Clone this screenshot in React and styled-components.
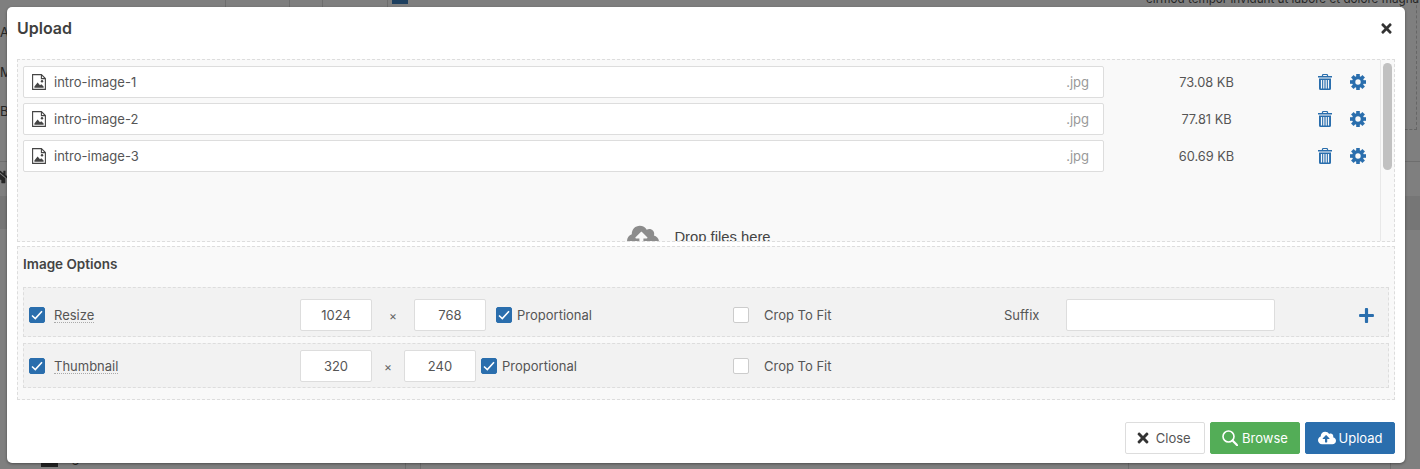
import React from 'react'
import styled, { createGlobalStyle } from 'styled-components'
import { FaPlus, FaTimes, FaCloudUploadAlt, FaHome } from 'react-icons/fa'

const Global = createGlobalStyle`
  html, body { margin: 0; padding: 0; height: 100%; overflow: hidden; }
  body { background: #7f7f7f; font-family: Inter, "Liberation Sans", sans-serif; color: #444; }
`

const Page = styled.div`
  width: 1420px;
  height: 469px;
  position: relative;
  overflow: hidden;
`
// what shows of the page behind the dimmed overlay
const Behind = styled.span`
  position: absolute;
  left: ${p => p.$x}px;
  top: ${p => p.$y}px;
  font-size: ${p => p.$size || 13}px;
  line-height: 16px;
  color: #262626;
  white-space: nowrap;
`
const BackLine = styled.div`
  position: absolute;
  left: ${p => p.$x}px;
  top: ${p => p.$y}px;
  width: ${p => p.$w}px;
  height: ${p => p.$h}px;
  background: ${p => p.$bg || '#6e6e6e'};
`
const BackDash = styled.div`
  position: absolute;
  left: 1400px;
  top: -10px;
  width: 15px;
  height: 138px;
  border: 1px dashed #666;
`
const Modal = styled.div`
  position: absolute;
  left: 7px;
  top: 7px;
  width: 1398px;
  height: 456px;
  background: #fff;
  border-radius: 5px;
  box-shadow: 0 1px 3px rgba(0, 0, 0, 0.4);
  padding: 0 10px;
  box-sizing: border-box;
  display: flex;
  flex-direction: column;
`
const Header = styled.div`
  height: 52px;
  flex: none;
  display: flex;
  align-items: center;
  justify-content: space-between;
  padding-bottom: 10px;
  box-sizing: border-box;
`
const Title = styled.h3`
  margin: 0;
  font-size: 16px;
  font-weight: 600;
  color: #3f3f3f;
`
const CloseX = styled.span`
  display: flex;
  color: #333;
  font-size: 15px;
  margin-right: 1px;
`
const DropArea = styled.div`
  height: 183px;
  flex: none;
  position: relative;
  overflow: hidden;
  background: #f9f9f9;
  border: 1px dashed #ddd;
  box-sizing: border-box;
  padding: 6px 5px;
`
const FileRow = styled.div`
  display: flex;
  align-items: center;
  height: 32px;
  margin-bottom: 5px;
`
const NameBox = styled.div`
  width: 1081px;
  height: 32px;
  flex: none;
  background: #fff;
  border: 1px solid #ddd;
  border-radius: 2px;
  box-sizing: border-box;
  display: flex;
  align-items: center;
  padding: 0 14px 0 8px;
  font-size: 13px;
  color: #555;
`
const FileIcon = styled.span`
  display: flex;
  margin-right: 8px;
`
const Ext = styled.span`
  margin-left: auto;
  color: #999;
`
const Size = styled.div`
  width: 205px;
  flex: none;
  padding-top: 1px;
  text-align: center;
  font-size: 12.8px;
  color: #555;
`
const Action = styled.span`
  width: ${p => p.$w}px;
  flex: none;
  display: flex;
  justify-content: center;
  color: #2a6ead;
`
const Rail = styled.div`
  position: absolute;
  top: 0;
  right: 0;
  bottom: 0;
  width: 14px;
  background: #f9f9f9;
  border-left: 1px solid #e8e8e8;
  box-sizing: border-box;
`
const Thumb = styled.div`
  width: 9px;
  height: 107px;
  margin: 3px 0 0 2px;
  border-radius: 5px;
  background: #c1c1c1;
`
const DropHint = styled.div`
  display: flex;
  justify-content: center;
  align-items: center;
  gap: 15px;
  margin-top: 49px;
  padding-right: 14px;
  font-family: "Liberation Sans", sans-serif;
  font-size: 14.8px;
  color: #444;
`
const HintIcon = styled.span`
  display: flex;
  font-size: 32px;
  color: #8c8c8c;
`
const Options = styled.div`
  height: 154px;
  flex: none;
  margin-top: 4px;
  background: #f9f9f9;
  border: 1px dashed #ddd;
  box-sizing: border-box;
  padding: 0 5px;
`
const OptionsTitle = styled.h4`
  margin: 0;
  height: 40px;
  padding-bottom: 7px;
  box-sizing: border-box;
  display: flex;
  align-items: center;
  font-size: 13.5px;
  font-weight: 600;
  color: #444;
`
const OptionRow = styled.div`
  height: ${p => p.$h}px;
  margin-bottom: 6px;
  padding: ${p => p.$top}px 0 0 5px;
  background: #f2f2f2;
  border: 1px dashed #ddd;
  box-sizing: border-box;
  display: flex;
  align-items: center;
  font-size: 13px;
  color: #555;
`
const Check = styled.span`
  width: 16px;
  height: 16px;
  flex: none;
  border-radius: 2px;
  box-sizing: border-box;
  display: flex;
  align-items: center;
  justify-content: center;
  background: ${p => (p.$on ? '#2a6ead' : '#fff')};
  border: 1px solid ${p => (p.$on ? '#2a6ead' : '#ccc')};
  margin-left: ${p => p.$gap || 0}px;
`
const Label = styled.span`
  width: ${p => p.$w}px;
  flex: none;
  padding-left: ${p => p.$pad || 0}px;
  box-sizing: border-box;
`
const Dotted = styled.span`
  display: inline-block;
  line-height: 14px;
  border-bottom: 1px dotted #aaa;
`
const NumInput = styled.div`
  width: ${p => p.$w || 72}px;
  height: 32px;
  flex: none;
  background: #fff;
  border: 1px solid #ddd;
  border-radius: 2px;
  box-sizing: border-box;
  display: flex;
  align-items: center;
  justify-content: center;
`
const Times = styled.span`
  width: ${p => p.$w}px;
  flex: none;
  text-align: center;
  color: #666;
  font-size: 12px;
`
const Plus = styled.span`
  display: flex;
  font-size: 17px;
  color: #2a6ead;
  margin-left: 83px;
`
const Footer = styled.div`
  flex: 1;
  display: flex;
  justify-content: flex-end;
  align-items: flex-start;
  gap: 5px;
  padding-top: 22px;
`
const Button = styled.div`
  height: 32px;
  box-sizing: border-box;
  width: ${p => p.$w}px;
  padding-right: ${p => p.$shift || 0}px;
  display: flex;
  align-items: center;
  justify-content: center;
  gap: ${p => p.$gap}px;
  border-radius: 2px;
  font-size: 13px;
  background: ${p => p.$bg};
  color: ${p => p.$fg};
  border: 1px solid ${p => p.$line};
`

const Tick = () => (
  <svg width="12" height="10" viewBox="0 0 12 10">
    <path d="M1 5.5 L4.3 8.5 L11 1.2" fill="none" stroke="#fff" strokeWidth="1.6" />
  </svg>
)

const Trash = () => (
  <svg width="14" height="16" viewBox="0 0 14 16">
    <path fill="currentColor" d="M4.5 0h5l.8 2H14v1.6H0V2h3.7zM5.3 1 5 2h4l-.3-1zM1 4.5h12v10A1.5 1.5 0 0 1 11.5 16h-9A1.5 1.5 0 0 1 1 14.5z" />
    <path fill="#f9f9f9" d="M2.9 6h1.2v8.4H2.9zM5.2 6h1.2v8.4H5.2zM7.6 6h1.2v8.4H7.6zM9.9 6h1.2v8.4H9.9z" />
  </svg>
)

// FontAwesome 4 style cog: ring with eight square teeth
const Gear = () => (
  <svg width="16" height="16" viewBox="0 0 16 16">
    <circle cx="8" cy="8" r="4.3" fill="none" stroke="currentColor" strokeWidth="3.2" />
    {[0, 45, 90, 135, 180, 225, 270, 315].map(a => (
      <rect key={a} x="6.2" y="0" width="3.6" height="3" fill="currentColor" transform={`rotate(${a} 8 8)`} />
    ))}
  </svg>
)

const ImageFile = () => (
  <svg width="14" height="16" viewBox="0 0 14 16">
    <path d="M.6.6h8.8l4 4v10.8H.6z M9.4.6v4h4" fill="none" stroke="#444" strokeWidth="1.1" />
    <circle cx="10" cy="7.3" r="1.2" fill="#444" />
    <path d="M2.4 13.8v-1.4l3.2-4 2.4 2.8 1.3-1 2.3 2.2v1.4z" fill="#444" />
  </svg>
)

const Lens = () => (
  <svg width="16" height="16" viewBox="0 0 16 16">
    <circle cx="6.5" cy="6.5" r="5.5" fill="none" stroke="#fff" strokeWidth="1.6" />
    <path d="M10.5 10.5 15.3 15.3" stroke="#fff" strokeWidth="2.2" strokeLinecap="round" />
  </svg>
)

const files = [
  { name: 'intro-image-1', size: '73.08 KB' },
  { name: 'intro-image-2', size: '77.81 KB' },
  { name: 'intro-image-3', size: '60.69 KB' },
]

export default function App() {
  return (
    <Page>
      <Global />
      {[225, 289, 322, 387].map(x => <BackLine key={x} $x={x} $y={0} $w={1} $h={7} />)}
      <BackLine $x={392} $y={0} $w={16} $h={4} $bg="#1d3f5f" />
      <BackLine $x={41} $y={463} $w={17} $h={4} $bg="#222" />
      {[405, 420, 1128, 1390].map(x => <BackLine key={x} $x={x} $y={463} $w={1} $h={6} />)}
      <BackLine $x={0} $y={161} $w={7} $h={1} />
      <BackLine $x={0} $y={196} $w={7} $h={33} $bg="#767676" />
      <BackLine $x={1405} $y={161} $w={15} $h={1} />
      <BackLine $x={1405} $y={196} $w={15} $h={34} $bg="#767676" />
      <BackDash />
      <Behind $x={0} $y={24}>A</Behind>
      <Behind $x={0} $y={64}>M</Behind>
      <Behind $x={0} $y={103}>B</Behind>
      <Behind $x={-8} $y={169}><FaHome size={16} /></Behind>
      <Behind $x={56} $y={449}>Pages</Behind>
      <Behind $x={1146} $y={-9} $size={11.7}>eirmod tempor invidunt ut labore et dolore magna</Behind>
      <Modal>
        <Header>
          <Title>Upload</Title>
          <CloseX><FaTimes /></CloseX>
        </Header>
        <DropArea>
          {files.map(f => (
            <FileRow key={f.name}>
              <NameBox>
                <FileIcon><ImageFile /></FileIcon>
                {f.name}
                <Ext>.jpg</Ext>
              </NameBox>
              <Size>{f.size}</Size>
              <Action $w={32}><Trash /></Action>
              <Action $w={33}><Gear /></Action>
            </FileRow>
          ))}
          <DropHint>
            <HintIcon><FaCloudUploadAlt /></HintIcon>
            Drop files here
          </DropHint>
          <Rail><Thumb /></Rail>
        </DropArea>
        <Options>
          <OptionsTitle>Image Options</OptionsTitle>
          <OptionRow $h={50} $top={6}>
            <Check $on><Tick /></Check>
            <Label $w={255} $pad={9}><Dotted>Resize</Dotted></Label>
            <NumInput>1024</NumInput>
            <Times $w={42}>×</Times>
            <NumInput>768</NumInput>
            <Check $on $gap={10}><Tick /></Check>
            <Label $w={221} $pad={5}>Proportional</Label>
            <Check />
            <Label $w={255} $pad={15}>Crop To Fit</Label>
            <Label $w={62}>Suffix</Label>
            <NumInput $w={209} />
            <Plus><FaPlus /></Plus>
          </OptionRow>
          <OptionRow $h={45} $top={1}>
            <Check $on><Tick /></Check>
            <Label $w={255} $pad={9}><Dotted>Thumbnail</Dotted></Label>
            <NumInput>320</NumInput>
            <Times $w={32}>×</Times>
            <NumInput>240</NumInput>
            <Check $on $gap={5}><Tick /></Check>
            <Label $w={236} $pad={5}>Proportional</Label>
            <Check />
            <Label $w={255} $pad={15}>Crop To Fit</Label>
          </OptionRow>
        </Options>
        <Footer>
          <Button $w={80} $gap={4.5} $shift={4} $bg="#fff" $fg="#555" $line="#ddd"><FaTimes color="#333" size={16} />Close</Button>
          <Button $w={90} $gap={4} $bg="#53ad57" $fg="#fff" $line="#53ad57"><Lens />Browse</Button>
          <Button $w={90} $gap={3} $bg="#2a6ead" $fg="#fff" $line="#2a6ead"><FaCloudUploadAlt size={18} />Upload</Button>
        </Footer>
      </Modal>
    </Page>
  )
}
